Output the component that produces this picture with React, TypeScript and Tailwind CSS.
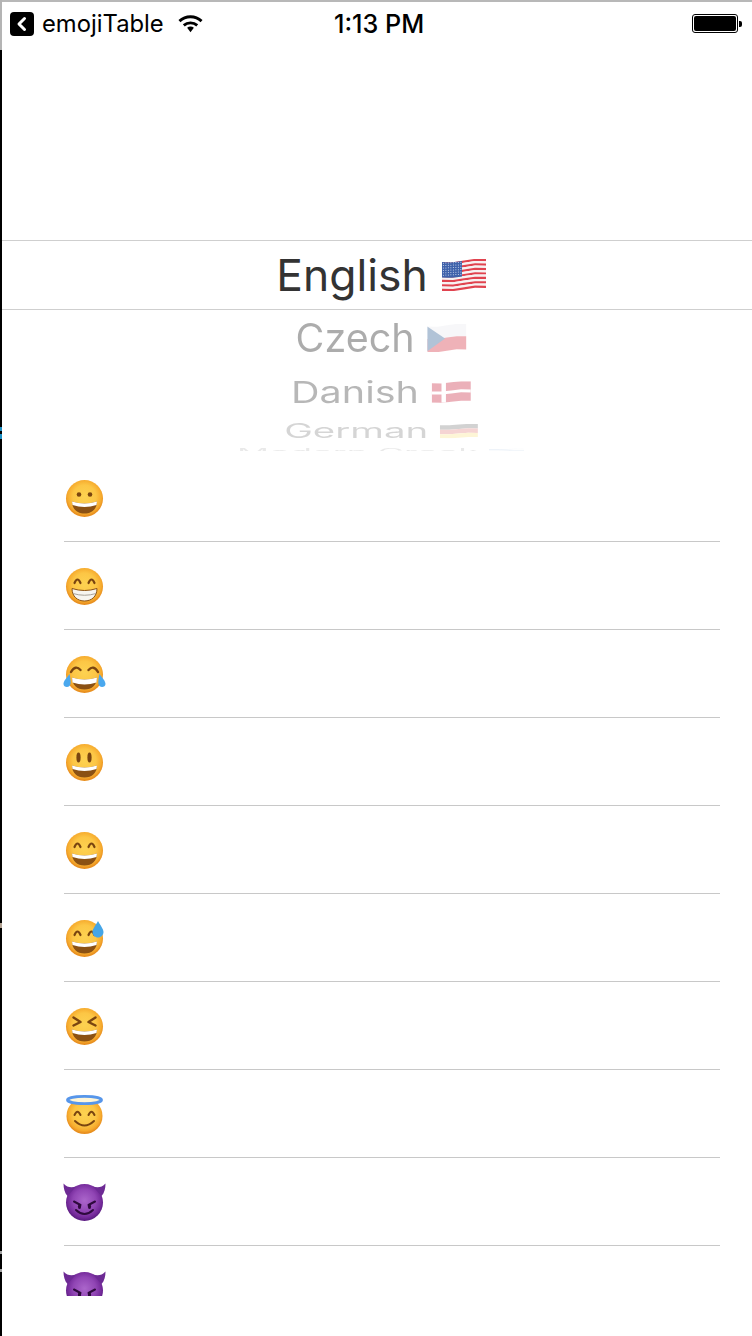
import { ReactNode } from 'react';

type FaceKind = 'grin' | 'beam' | 'joy' | 'smiley' | 'smile' | 'sweat' | 'squint' | 'halo' | 'imp';

const ROWS: FaceKind[] = ['grin', 'beam', 'joy', 'smiley', 'smile', 'sweat', 'squint', 'halo', 'imp', 'imp'];

const BROWN = '#7a4510';

// one wavy band across the flag, y0 to y1 in a 44x32 box
const band = (y0: number, y1: number, x0 = 0, x1 = 44) => {
  const top = (x: number, y: number) => y + 3 - (3 * x) / 44 + 0.9 * Math.sin((x / 44) * Math.PI * 2);
  const steps = [0, 0.25, 0.5, 0.75, 1].map(t => x0 + (x1 - x0) * t);
  const a = steps.map(x => `${x.toFixed(1)} ${top(x, y0).toFixed(2)}`).join(' L');
  const b = [...steps].reverse().map(x => `${x.toFixed(1)} ${top(x, y1).toFixed(2)}`).join(' L');
  return `M${a} L${b}Z`;
};

const FlagUS = () => (
  <svg viewBox="0 0 44 32" className="w-[44px] h-[32px] shrink-0">
    {Array.from({ length: 13 }).map((_, i) => (
      <path key={i} d={band((i * 29) / 13, ((i + 1) * 29) / 13)} fill={i % 2 ? '#f6f2f2' : '#e0434f'} />
    ))}
    <path d={band(0, 15.6, 0, 20)} fill="#3f62ab" />
    {Array.from({ length: 6 }).map((_, r) =>
      Array.from({ length: 8 }).map((_, c) => (
        <circle key={`${r}-${c}`} cx={1.4 + c * 2.5} cy={4.2 + r * 2.4 - c * 0.12} r="0.5" fill="#e4e9f5" />
      ))
    )}
  </svg>
);

const FlagCZ = () => (
  <svg viewBox="0 0 44 32" className="w-[44px] h-[32px] shrink-0">
    <path d={band(0, 14)} fill="#ecedf2" />
    <path d={band(14, 29)} fill="#d8404f" />
    <path d="M0 3 L20 16.5 L0 31Z" fill="#3e6a9c" />
  </svg>
);

const FlagDK = () => (
  <svg viewBox="0 0 44 32" className="w-[44px] h-[32px] shrink-0">
    <path d={band(0, 29)} fill="#c8213a" />
    <path d={band(12, 16.5)} fill="#ffffff" />
    <path d="M11 0 H16 V32 H11Z" fill="#ffffff" />
  </svg>
);

const FlagDE = () => (
  <svg viewBox="0 0 44 32" className="w-[44px] h-[32px] shrink-0">
    <path d={band(0, 10)} fill="#222222" />
    <path d={band(10, 20)} fill="#d22f27" />
    <path d={band(20, 29)} fill="#f6cf3a" />
  </svg>
);

const FlagGR = () => (
  <svg viewBox="0 0 44 32" className="w-[44px] h-[32px] shrink-0">
    {Array.from({ length: 9 }).map((_, i) => (
      <path key={i} d={band((i * 29) / 9, ((i + 1) * 29) / 9)} fill={i % 2 ? '#ffffff' : '#2f6fb5'} />
    ))}
  </svg>
);

const ArcEyes = () => (
  <g fill="none" stroke={BROWN} strokeWidth="2.2" strokeLinecap="round">
    <path d="M11 19 Q14 12 17 19" />
    <path d="M25 19 Q28 12 31 19" />
  </g>
);

const OpenMouth = ({ teeth = 3.6 }: { teeth?: number }) => (
  <>
    <path d="M8.5 25.5 Q21 29.5 33.5 25.5 C33.5 33 28.5 37.5 21 37.5 C13.5 37.5 8.5 33 8.5 25.5Z" fill="#8b5113" />
    <path d={`M8.5 25.5 Q21 29.5 33.5 25.5 L33 ${25.5 + teeth} Q21 ${29.5 + teeth} 9 ${25.5 + teeth}Z`} fill="#ffffff" />
  </>
);

const TeethMouth = () => (
  <>
    <path d="M8.5 24.5 Q21 28.5 33.5 24.5 C33.5 32.5 28 37 21 37 C14 37 8.5 32.5 8.5 24.5Z" fill="#f7f5f0" stroke="#8b5113" strokeWidth="1" />
    <path d="M9.5 29.5 Q21 33 32.5 29.5" fill="none" stroke="#a8a29a" strokeWidth="1" />
  </>
);

const faceParts: Record<FaceKind, ReactNode> = {
  grin: (
    <>
      <circle cx="15.5" cy="18.5" r="2.3" fill={BROWN} />
      <circle cx="26.5" cy="18.5" r="2.3" fill={BROWN} />
      <OpenMouth />
    </>
  ),
  beam: (
    <>
      <ArcEyes />
      <TeethMouth />
    </>
  ),
  joy: (
    <>
      <g fill="none" stroke={BROWN} strokeWidth="2.4" strokeLinecap="round">
        <path d="M7.5 20 Q12 12.5 17 18" />
        <path d="M25 18 Q30 12.5 34.5 20" />
      </g>
      <OpenMouth teeth={5} />
      <path d="M6 22 C2.5 27 0 29 0 32 C0 35 4 36 6 34 C8 32 7 27 6 22Z" fill="#4aa8ee" />
      <path d="M36 22 C39.5 27 42 29 42 32 C42 35 38 36 36 34 C34 32 35 27 36 22Z" fill="#4aa8ee" />
    </>
  ),
  smiley: (
    <>
      <ellipse cx="15" cy="17.5" rx="2.1" ry="5" fill={BROWN} />
      <ellipse cx="26" cy="17.5" rx="2.1" ry="5" fill={BROWN} />
      <OpenMouth />
    </>
  ),
  smile: (
    <>
      <ArcEyes />
      <OpenMouth />
    </>
  ),
  sweat: (
    <>
      <ArcEyes />
      <OpenMouth />
      <path d="M34.5 5 C31.5 10.5 29 13 29 16 C29 19 31.5 21.5 34.5 21.5 C37.5 21.5 40 19 40 16 C40 13 37.5 10.5 34.5 5Z" fill="#45a5e6" />
    </>
  ),
  squint: (
    <>
      <g fill="none" stroke={BROWN} strokeWidth="2.4" strokeLinecap="round" strokeLinejoin="round">
        <path d="M10 13.5 L17 18 L10 21.5" />
        <path d="M32 13.5 L25 18 L32 21.5" />
      </g>
      <OpenMouth />
    </>
  ),
  halo: (
    <>
      <g fill="none" stroke={BROWN} strokeWidth="2" strokeLinecap="round">
        <path d="M11 23 Q14 16.5 17 23" />
        <path d="M25 23 Q28 16.5 31 23" />
        <path d="M11.5 29 Q21 38 30.5 29" />
      </g>
      <ellipse cx="21" cy="8" rx="16" ry="3" fill="#fff6d8" />
      <ellipse cx="21" cy="8" rx="17" ry="3.6" fill="none" stroke="#5796ea" strokeWidth="2.8" />
    </>
  ),
  imp: (
    <>
      <path d="M0 3.5 C4 8 9 8 13 6 L4 16 C1 13 0 8 0 3.5Z" fill="#6d2a94" />
      <path d="M42 3.5 C38 8 33 8 29 6 L38 16 C41 13 42 8 42 3.5Z" fill="#6d2a94" />
      <g fill="none" stroke="#2e0a3d" strokeWidth="2" strokeLinecap="round">
        <path d="M10.5 21.5 L17 25" />
        <path d="M31.5 21.5 L25 25" />
        <path d="M12.5 30 Q21 38 29.5 30" />
      </g>
      <ellipse cx="16" cy="26.5" rx="1.6" ry="2.6" fill="#2e0a3d" />
      <ellipse cx="26" cy="26.5" rx="1.6" ry="2.6" fill="#2e0a3d" />
    </>
  ),
};

const Face = ({ kind, id }: { kind: FaceKind; id: string }) => {
  const imp = kind === 'imp';
  const halo = kind === 'halo';
  return (
    <svg viewBox="0 0 44 44" className="w-11 h-11 block overflow-visible">
      <defs>
        <radialGradient id={id} cx="50%" cy="45%" r="52%">
          <stop offset="0%" stopColor={imp ? '#ab66cb' : '#fdd251'} />
          <stop offset="60%" stopColor={imp ? '#9045b4' : '#fcc645'} />
          <stop offset="88%" stopColor={imp ? '#742a9a' : '#f6aa2d'} />
          <stop offset="100%" stopColor={imp ? '#5f1f85' : '#e88f1f'} />
        </radialGradient>
      </defs>
      <g transform="translate(-0.5 0)">
        <circle cx="21" cy={halo ? 24 : 22.5} r={halo ? 18 : 18.5} fill={`url(#${id})`} />
        {faceParts[kind]}
      </g>
    </svg>
  );
};

const PICKER = [
  { label: 'Czech', flag: <FlagCZ />, row: 'h-[56px]', item: 'scale-x-[0.89] scale-y-[0.88] opacity-40 blur-[0.4px]' },
  { label: 'Danish', flag: <FlagDK />, row: 'h-[52px]', item: 'scale-x-[0.89] scale-y-[0.67] opacity-35 blur-[0.4px]' },
  { label: 'German', flag: <FlagDE />, row: 'h-[26px]', item: 'scale-x-[0.865] scale-y-[0.45] opacity-20 blur-[0.4px]' },
  { label: 'Modern Greek', flag: <FlagGR />, row: 'h-[16px]', item: 'scale-x-[0.8] scale-y-[0.22] opacity-10 blur-[0.4px]' },
];

export default function App() {
  return (
    <div className="flex w-[752px] h-[1336px] bg-white overflow-hidden font-['Inter','Noto_Sans',sans-serif]">
      {/* window edge showing through on the left */}
      <div className="relative w-[2px] shrink-0 flex flex-col">
        <div className="h-[50px] bg-[#b4b4b4]" />
        <div className="flex-1 bg-black" />
        <div className="absolute left-0 top-[427px] w-[2px] h-[4px] bg-[#1b8fc4]" />
        <div className="absolute left-0 top-[434px] w-[2px] h-[5px] bg-[#1b8fc4]" />
        <div className="absolute left-0 top-[923px] w-[2px] h-[5px] bg-[#b0a090]" />
        <div className="absolute left-0 top-[1251px] w-[2px] h-[3px] bg-[#a0a0a0]" />
        <div className="absolute left-0 top-[1269px] w-[2px] h-[3px] bg-[#a0a0a0]" />
      </div>

      <div className="flex-1 min-w-0 flex flex-col">
        <div className="h-[2px] bg-[#b8b8b8]" />

        {/* Status bar */}
        <div className="h-[43px] flex items-center pl-[8px] pr-[10px] relative">
          <div className="w-[24px] h-[24px] rounded-[4px] bg-black flex items-center justify-center">
            <svg viewBox="0 0 24 24" className="w-6 h-6">
              <path d="M14.5 6.5 L9 12 L14.5 17.5" fill="none" stroke="#fff" strokeWidth="3" strokeLinecap="round" strokeLinejoin="round" />
            </svg>
          </div>
          <span className="ml-[8px] text-[23.8px] leading-none text-black">emojiTable</span>
          <svg viewBox="0 0 26 20" className="ml-[14px] w-[25px] h-[20px]">
            <path d="M1.5 7 C8 1 18 1 24.5 7" fill="none" stroke="#000" strokeWidth="3" />
            <path d="M6 11.5 C10 8 16 8 20 11.5" fill="none" stroke="#000" strokeWidth="3" />
            <path d="M9.5 14 C11.5 12.3 14.5 12.3 16.5 14 L13 18.5Z" fill="#000" />
          </svg>
          <span className="absolute left-[332px] top-[8px] text-[25.2px] leading-[28px] font-medium text-black">1:13 PM</span>
          <div className="ml-auto flex items-center">
            <div className="w-[46px] h-[19px] rounded-[3px] border border-black p-[1px]">
              <div className="w-full h-full rounded-[2px] bg-black" />
            </div>
            <div className="w-[3px] h-[6px] rounded-r-[2px] bg-black ml-[1px]" />
          </div>
        </div>

        <div className="h-[195px]" />

        {/* Language picker */}
        <div className="h-[211px] overflow-hidden text-[44.4px] leading-none flex flex-col">
          <div className="h-[70px] shrink-0 border-y border-[#cfcfcf] flex items-center justify-center gap-[14px] text-[#333333] pl-[8px]">
            <span>English</span>
            <FlagUS />
          </div>
          {PICKER.map(p => (
            <div key={p.label} className={`${p.row} shrink-0 flex items-center justify-center overflow-visible pl-[8px]`}>
              <div className={`flex items-center gap-[14px] whitespace-nowrap text-[#333333] ${p.item}`}>
                <span>{p.label}</span>
                {p.flag}
              </div>
            </div>
          ))}
        </div>

        <div className="h-[3px]" />

        {/* Emoji list */}
        <div className="h-[842px] overflow-hidden pl-[62px] pr-[32px]">
          {ROWS.map((kind, i) => (
            <div key={i} className="h-[88px] border-b border-[#c8c8c8] flex items-center">
              <Face kind={kind} id={`face-${i}`} />
            </div>
          ))}
        </div>
      </div>
    </div>
  );
}
